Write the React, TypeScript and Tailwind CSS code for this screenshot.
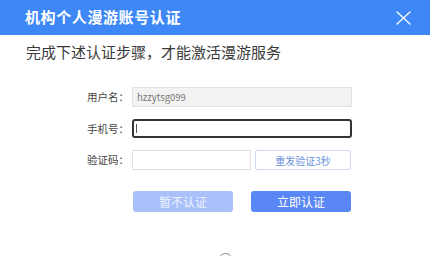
import { useState } from 'react';

function CloseIcon() {
  return (
    <svg width="17" height="14" viewBox="0 0 17 14" fill="none" stroke="currentColor" strokeWidth="1.6" strokeLinecap="round">
      <path d="M2 1L15 13" />
      <path d="M15 1L2 13" />
    </svg>
  );
}

export default function App() {
  const [phone, setPhone] = useState('');
  const [code, setCode] = useState('');

  return (
    <div
      className="w-[430px] h-[256px] bg-white overflow-hidden text-[#333]"
      style={{ fontFamily: '"Noto Sans CJK SC", "Liberation Sans", sans-serif' }}
    >
      {/* Header */}
      <div className="h-[35px] bg-[#3d87f6] flex items-center justify-between pl-[25px] pr-[18px]">
        <h1 className="text-[15px] font-bold text-white tracking-[0.6px]">机构个人漫游账号认证</h1>
        <button className="text-white/90">
          <CloseIcon />
        </button>
      </div>

      <p className="pl-[26px] mt-[8px] text-[15px] leading-[18px] text-[#3a3a3a]">
        完成下述认证步骤，才能激活漫游服务
      </p>

      {/* Form */}
      <div className="mt-[26px] pl-[87px] flex flex-col gap-[12px]">
        <div className="flex items-center">
          <label className="w-[45px] text-[10.5px] text-[#444]">用户名：</label>
          <div className="w-[220px] h-[20px] bg-[#f2f2f2] border border-[#e2e2e2] flex items-center px-[4px] text-[9.5px] text-[#777]">
            hzzytsg099
          </div>
        </div>
        <div className="flex items-center">
          <label className="w-[45px] text-[10.5px] text-[#444]">手机号：</label>
          <div className="relative flex">
            <input
              value={phone}
              onChange={(e) => setPhone(e.target.value)}
              className="w-[220px] h-[19px] border-2 border-[#333] rounded-[3px] outline-none px-[2px] text-[10px] caret-transparent"
              autoFocus
            />
            {/* caret */}
            <span className="absolute left-[4px] top-[5px] w-px h-[9px] bg-[#555]" />
          </div>
        </div>
        <div className="flex items-center">
          <label className="w-[45px] text-[10.5px] text-[#444]">验证码：</label>
          <input
            value={code}
            onChange={(e) => setCode(e.target.value)}
            className="w-[119px] h-[20px] border border-[#e0e0e0] outline-none px-[4px] text-[10px]"
          />
          <button className="ml-[4px] w-[96px] h-[20px] border border-[#cfd9ef] rounded-[2px] text-[10px] text-[#6b93db] bg-white">
            重发验证3秒
          </button>
        </div>

        <div className="flex mt-[9px] ml-[46px] gap-[18px]">
          <button className="w-[100px] h-[21px] rounded-[3px] bg-[#a9c0fa] text-[#eef3ff] text-[12px]">暂不认证</button>
          <button className="w-[100px] h-[21px] rounded-[3px] bg-[#5a87f6] text-white text-[12px]">立即认证</button>
        </div>
      </div>

      <div className="mt-[41px] ml-[218px] w-[15px] h-[15px] rounded-full border border-[#888]" />
    </div>
  );
}
